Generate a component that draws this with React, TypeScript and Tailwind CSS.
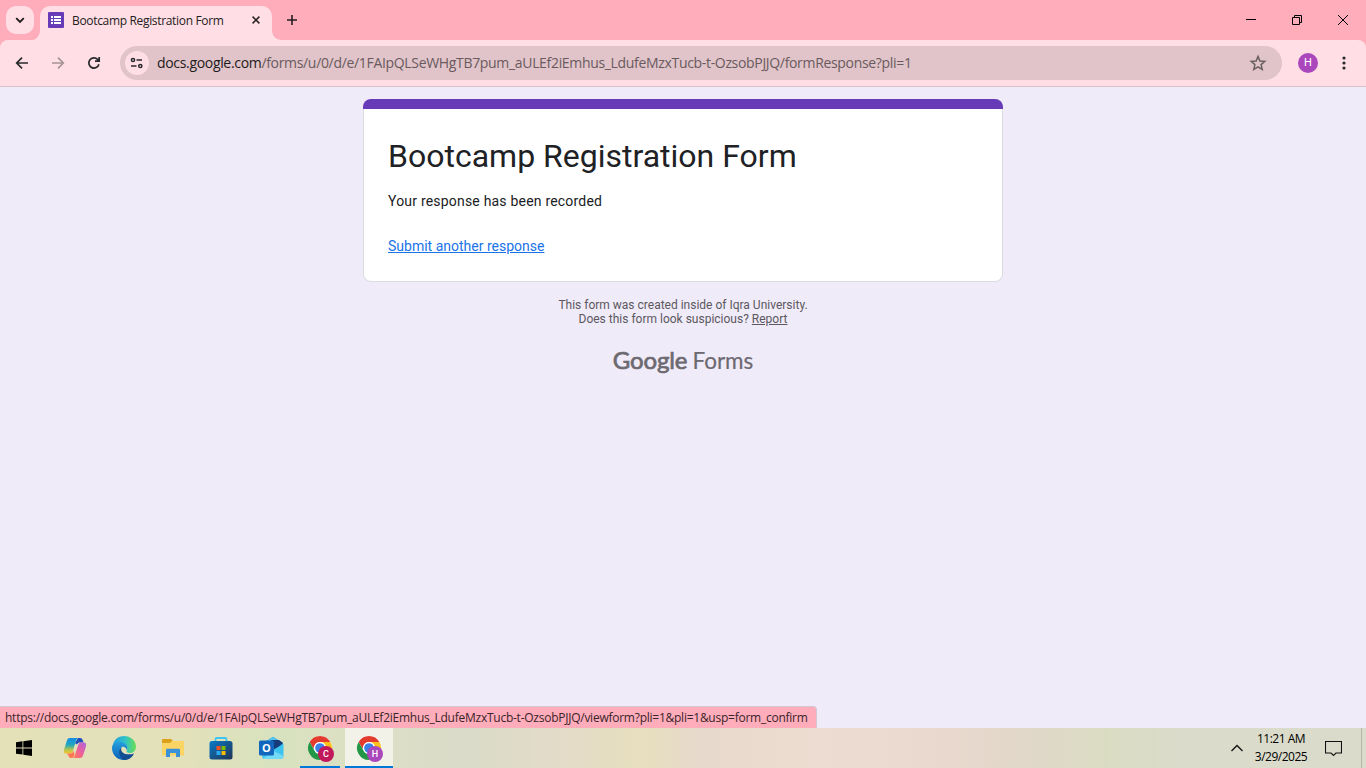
import React from 'react';

const segoe = "font-['Open_Sans','Noto_Sans',sans-serif]";

function ChromeLogo({ letter, badge }: { letter: string; badge: string }) {
  return (
    <svg width="28" height="28" viewBox="0 0 28 28">
      <circle cx="13" cy="13" r="12" fill="#fff" />
      <path d="M2.6 7A12 12 0 0 1 23.4 7H13A6 6 0 0 0 7.8 10L6.5 13.5Z" fill="#e33b2e" />
      <path d="M2.6 7L7.8 16A6 6 0 0 0 13 19L13 25A12 12 0 0 1 2.6 7Z" fill="#239747" />
      <path d="M23.4 7A12 12 0 0 1 13 25L18.2 16A6 6 0 0 0 13 7Z" fill="#fcc21b" />
      <circle cx="13" cy="13" r="6" fill="#fff" />
      <circle cx="13" cy="13" r="4.8" fill="#3b7fe8" />
      <circle cx="19" cy="19" r="8" fill={badge} />
      <text x="19" y="22.2" textAnchor="middle" fill="#fff" fontSize="9" fontFamily="Roboto, sans-serif" fontWeight="500">{letter}</text>
    </svg>
  );
}

function TitleBar() {
  return (
    <header className="flex h-10 bg-[#ffadbb]">
      <button className="ml-1.5 mt-1.5 flex size-7 items-center justify-center rounded-[10px] bg-[#ffdfe5]">
        <svg width="10" height="7" viewBox="0 0 10 7" fill="none" stroke="#1f1a1b" strokeWidth="1.8"><path d="M1.2 1.2L5 5L8.8 1.2" /></svg>
      </button>
      <svg className="-ml-px mt-auto shrink-0" width="7" height="10" viewBox="0 0 7 10"><path d="M7 0V10H0C4 9 7 5 7 0Z" fill="#ffdfe5" /></svg>
      <div className="mt-1.5 flex h-[34px] w-[232px] items-center rounded-t-[10px] bg-[#ffdfe5] pb-1.5 pl-2">
        <svg className="shrink-0" width="16" height="16" viewBox="0 0 16 16">
          <rect width="16" height="16" rx="1" fill="#673ab7" />
          <path d="M3 4h2v2H3zM3 7h2v2H3zM3 10h2v2H3zM6 4h7v2H6zM6 7h7v2H6zM6 10h7v2H6z" fill="#fff" />
        </svg>
        <span className="ml-2 w-[172px] whitespace-nowrap pt-px text-[12px] leading-4 tracking-[-0.33px] text-[#252021]">Bootcamp Registration Form</span>
        <svg className="ml-[8px] shrink-0" width="8" height="8" viewBox="0 0 8 8" stroke="#252021" strokeWidth="1.5"><path d="M.6 .6L7.4 7.4M7.4 .6L.6 7.4" /></svg>
      </div>
      <svg className="mt-auto shrink-0" width="10" height="10" viewBox="0 0 10 10"><path d="M0 0V10H10C4 10 0 6 0 0Z" fill="#ffdfe5" /></svg>
      <svg className="ml-[5px] mt-[15px] shrink-0" width="10" height="10" viewBox="0 0 10 10" stroke="#252021" strokeWidth="1.6"><path d="M0 5H10M5 0V10" /></svg>
      <div className="ml-auto flex text-black">
        <svg width="46" height="40" viewBox="0 0 46 40" stroke="currentColor"><path d="M18 19.5H28" /></svg>
        <svg width="46" height="40" viewBox="0 0 46 40" fill="none" stroke="currentColor"><path d="M18.5 17.5h7v7h-7zM20.5 17.5v-2h7v7h-2" /></svg>
        <svg width="46" height="40" viewBox="0 0 46 40" stroke="currentColor"><path d="M18 15L28 25M28 15L18 25" /></svg>
      </div>
    </header>
  );
}

function Toolbar() {
  return (
    <div className="bg-[#ffadbb]">
      <div className="flex h-[47px] items-center rounded-t-[8px] border-b border-[#d8bfc9] bg-[#ffdfe5]">
        <svg className="ml-[12px] shrink-0" width="60" height="20" viewBox="0 0 60 20" fill="none" stroke="#28292c" strokeWidth="1.7">
          <path d="M16 10H5M10 4.6L4.7 10L10 15.4" />
          <path d="M40 10H51M46 4.6L51.3 10L46 15.4" stroke="#a79498" />
        </svg>
        <svg className="ml-3 shrink-0" width="20" height="20" viewBox="0 0 20 20" fill="none" stroke="#28292c" strokeWidth="1.7"><path d="M14.9 11.2A5.1 5.1 0 1 1 13.6 6.4L15 8M15.2 4V8.2H11" /></svg>
        <div className="ml-4 flex h-[34px] w-[1162px] shrink-0 items-center rounded-full bg-[#e0c4c9] pl-[5px]">
          <span className="flex size-6 shrink-0 items-center justify-center rounded-full bg-[#ffdfe5]">
            <svg width="14" height="12" viewBox="0 0 14 12" fill="none" stroke="#28292c" strokeWidth="1.5"><circle cx="3" cy="3" r="1.6" /><path d="M6.5 3H12M1 9H6.5" /><circle cx="10.3" cy="9" r="1.6" /></svg>
          </span>
          <span className="ml-2 whitespace-nowrap pb-0.5 text-[14px] tracking-[-0.325px] text-[#6a5a5e]"><span className="text-[#1f1a1b]">docs.google.com</span>/forms/u/0/d/e/1FAIpQLSeWHgTB7pum_aULEf2iEmhus_LdufeMzxTucb-t-OzsobPJJQ/formResponse?pli=1</span>
          <svg className="ml-auto mr-[15px]" width="18" height="18" viewBox="0 0 18 18" fill="none" stroke="#6b6062" strokeWidth="1.5"><path d="M9 2.4L10.9 7L15.8 7.4L12.1 10.6L13.2 15.4L9 12.8L4.8 15.4L5.9 10.6L2.2 7.4L7.1 7Z" /></svg>
        </div>
        <span className="ml-4 flex size-5 items-center justify-center rounded-full bg-[#ab47bc] font-[Roboto,sans-serif] text-[11px] text-white">H</span>
        <svg className="ml-6" width="4" height="16" viewBox="0 0 4 16" fill="#28292c"><circle cx="2" cy="3" r="1.6" /><circle cx="2" cy="8" r="1.6" /><circle cx="2" cy="13" r="1.6" /></svg>
      </div>
    </div>
  );
}

function FormPage() {
  return (
    <main className="relative flex h-[641px] flex-col items-center bg-[#f0ebf8] pt-3 font-[Roboto,sans-serif]">
      <section className="h-[183px] w-[640px]">
        <div className="h-2.5 rounded-t-lg bg-[#673ab7]" />
        <div className="h-[173px] rounded-b-lg border border-t-0 border-[#dadce0] bg-white px-6 pt-[27px]">
          <h1 className="text-[32px] leading-10 text-[#202124]">Bootcamp Registration Form</h1>
          <p className="mt-[15px] text-[14px] leading-5 tracking-[0.2px] text-[#202124]">Your response has been recorded</p>
          <a className="mt-[25px] block text-[14px] leading-5 text-[#1a73e8] underline">Submit another response</a>
        </div>
      </section>
      <p className="mt-4 text-center text-[12px] leading-[14px] text-[#5b585f]">This form was created inside of Iqra University.<br />Does this form look suspicious? <a className="underline">Report</a></p>
      <div className="mt-[18px] flex h-8 items-baseline gap-[5px] font-[Lato,sans-serif] text-[22.5px] leading-8 text-[#6c6970]">
        <span className="text-[24px] tracking-[-0.1px] [-webkit-text-stroke:0.7px_#6c6970]">Google</span><span className="[-webkit-text-stroke:0.2px_#6c6970]">Forms</span>
      </div>
      <div className={`absolute bottom-0 left-0 h-[22px] w-[817px] whitespace-nowrap rounded-tr border-r border-t border-[#d5c7d2] bg-[#ffadbb] pl-[5px] text-[12px] leading-[22px] tracking-[-0.25px] text-[#382429] ${segoe}`}>https://docs.google.com/forms/u/0/d/e/1FAIpQLSeWHgTB7pum_aULEf2iEmhus_LdufeMzxTucb-t-OzsobPJJQ/viewform?pli=1&amp;pli=1&amp;usp=form_confirm</div>
    </main>
  );
}

function Taskbar() {
  return (
    <footer className="flex h-10 items-center bg-[linear-gradient(90deg,#e4e1b9_0%,#e3e1ba_13%,#d8e2be_20%,#dddfc5_27%,#dadbc9_34%,#e3dbc8_41%,#e7dfbe_47%,#e7d9cb_51%,#ecdcd1_60%,#e8d8cd_70%,#dfd7c8_76%,#dadcc2_81%,#dadbca_86%,#dadbca_100%)]">
      <svg className="ml-4 shrink-0" width="16" height="16" viewBox="0 0 16 16"><path d="M0 2.3L6.5 1.3V7.5H0zM7.3 1.2L16 0V7.5H7.3zM0 8.4H6.5V14.6L0 13.7zM7.3 8.4H16V16L7.3 14.8z" /></svg>
      <svg className="ml-[31px] shrink-0" width="24" height="22" viewBox="0 0 24 22">
        <defs>
          <linearGradient id="copA" x1="0" y1="0" x2="0" y2="1"><stop stopColor="#138ce5" /><stop offset=".45" stopColor="#22a8bc" /><stop offset=".75" stopColor="#b1c64d" /><stop offset="1" stopColor="#f6c32b" /></linearGradient>
          <linearGradient id="copB" x1="1" y1="0" x2="0" y2="1"><stop stopColor="#aa63e2" /><stop offset=".5" stopColor="#ee609b" /><stop offset="1" stopColor="#ff814b" /></linearGradient>
        </defs>
        <path d="M15 1h2c2 0 2.3 1 3 3l.6 1.5H16l-2.5 2L12 6z" fill="#204fbd" />
        <path d="M7 1h9c-2 0-2.6 1.3-3.3 3.7L10 13.5C9.3 16 8 16.5 6 16.5H3.5C.8 16.5.5 14.5 1.2 12L3.8 4C4.6 1.6 5.4 1 7 1Z" fill="url(#copA)" />
        <path d="M4 16.5h3c2 0 3-1 3.6-3l.9 4c-.6 2.4-1.5 3.5-2.5 3.5H8c-1.8 0-2.4-1.5-3-3z" fill="#ff7755" />
        <path d="M17 21H9c2 0 2.6-1.3 3.2-3.7L15 8.5c.7-2.5 2-3 4-3h1.5c2.7 0 3 2 2.3 4.5L20.2 18c-.8 2.4-1.6 3-3.2 3Z" fill="url(#copB)" />
      </svg>
      <svg className="ml-[25px] shrink-0" width="24" height="24" viewBox="0 0 24 24">
        <defs>
          <linearGradient id="edgeA"><stop stopColor="#219ee2" /><stop offset=".55" stopColor="#30c2c6" /><stop offset="1" stopColor="#69df52" /></linearGradient>
          <linearGradient id="edgeB" x1="0" y1="0" x2="0" y2="1"><stop stopColor="#259ddd" /><stop offset="1" stopColor="#0b62b8" /></linearGradient>
        </defs>
        <path d="M.5 10.5C1.5 4 6 0 12 0C19 0 24 5 24 10.7C24 15 20.7 17 18 17C15 17 14 15.8 14.7 14.7C17 10.5 13.7 8 9.5 7.2C6 6.5 2.5 7.5 .5 10.5Z" fill="url(#edgeA)" />
        <path d="M0 12C0 8 4 5.5 8.5 6C12 6.5 15.5 9 15.5 12L14.7 14C13.5 11 10.7 9.8 9 12C6.5 15.5 10 22.5 15 23.5C6 26 0 19 0 12Z" fill="url(#edgeB)" />
        <path d="M9.7 11.2C7.5 15 12 20.5 22 17.5C20 22 16 24.3 12 24C7 22 5.5 14 9.7 11.2Z" fill="#124c91" />
      </svg>
      <svg className="ml-[26px] shrink-0" width="22" height="19" viewBox="0 0 22 19">
        <path d="M0 2.5V1.2Q0 0 1.2 0H9l2 2h10v14H0z" fill="#dda01b" /><path d="M0 4h8l2-2h11q1 0 1 1v13.5H0z" fill="#fcd464" />
        <path d="M4 18V11q0-1.2 1.2-1.2h11.6Q18 9.8 18 11v7h-4v-4H8v4z" fill="#3a91d7" />
      </svg>
      <svg className="ml-[25px] shrink-0" width="24" height="24" viewBox="0 0 24 24">
        <defs><linearGradient id="storeG" x1="0" y1="0" x2="1" y2="1"><stop stopColor="#087ac9" /><stop offset="1" stopColor="#223452" /></linearGradient></defs>
        <path d="M6.5 6V3.2Q6.5 2 7.7 2h8.6Q17.5 2 17.5 3.2V6" fill="none" stroke="#40c5f3" strokeWidth="1.8" /><rect x=".5" y="5" width="23" height="18.5" rx="2.5" fill="url(#storeG)" />
        <path d="M7.5 10h4v4h-4z" fill="#f25022" /><path d="M12.5 10h4v4h-4z" fill="#7fba00" /><path d="M7.5 15h4v4h-4z" fill="#2ba9f0" /><path d="M12.5 15h4v4h-4z" fill="#ffb900" />
      </svg>
      <svg className="ml-[26px] shrink-0" width="25" height="24" viewBox="0 0 25 24">
        <path d="M4 7L14 .8L24 7V13L14 17L4 13z" fill="#2d9be5" /><path d="M14 1l10 6-8 5-8-7z" fill="#54c7ef" /><path d="M12 4h8l4 3-9 8z" fill="#153b78" /><path d="M24.5 8v12q0 3-3 3H5q-2-1-2-3z" fill="#3dc3ef" /><path d="M3 23h18.5q3-1 3-3L15 15z" fill="#73daf5" />
        <rect y="4.5" width="15" height="15" rx="1.5" fill="#1267bd" /><text x="7.5" y="16" textAnchor="middle" fill="#fff" fontSize="11" fontWeight="700" fontFamily="Open Sans, sans-serif">O</text>
      </svg>
      <div className="ml-4 flex h-10 w-10 justify-center border-b-2 border-[#0078d7] pl-[2px] pt-[7px]"><ChromeLogo letter="C" badge="#c2185b" /></div>
      <div className="ml-[5px] flex h-10 w-12 justify-center border-b-2 border-[#0078d7] bg-[#f2f2e9] pl-[2px] pt-[7px]"><ChromeLogo letter="H" badge="#ab47bc" /></div>
      <svg className="ml-auto shrink-0" width="14" height="8" viewBox="0 0 14 8" fill="none" stroke="#111" strokeWidth="1.3"><path d="M1.5 7L7 1.5L12.5 7" /></svg>
      <div className="ml-2.5 w-[54px] whitespace-nowrap text-center text-[12px] leading-[18px] tracking-[-0.5px] text-black"><div>11:21 AM</div><div>3/29/2025</div></div>
      <svg className="ml-[17px] shrink-0" width="17" height="17" viewBox="0 0 17 17" fill="none" stroke="#111" strokeWidth="1.1"><path d="M.5 1.5h16v11.5h-5.5L8.5 15.5L6 13H.5z" /></svg>
      <div className="ml-[19px] mr-1 h-10 border-l border-[#b5b7a5]" />
    </footer>
  );
}

export default function App() {
  return (
    <div className={`flex h-[768px] w-[1366px] flex-col overflow-hidden ${segoe}`}>
      <TitleBar /><Toolbar /><FormPage /><Taskbar />
    </div>
  );
}
